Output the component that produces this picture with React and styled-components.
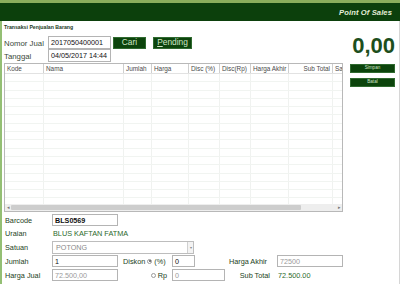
import React from "react";
import styled, { createGlobalStyle } from "styled-components";

const Global = createGlobalStyle`
  html, body { margin: 0; padding: 0; background: #fff; }
  body { font-family: "Liberation Sans", Arial, sans-serif; }
  * { box-sizing: border-box; }
`;

const Window = styled.div`
  width: 400px;
  height: 284px;
  overflow: hidden;
  display: flex;
  flex-direction: column;
  background: #fff;
`;

const TopStrip = styled.div`
  height: 3px;
  background: #8aae5c;
`;

const Header = styled.div`
  height: 18px;
  background: #0c400c;
  display: flex;
  align-items: center;
  justify-content: flex-end;
  padding-right: 8px;
`;

const HeaderTitle = styled.span`
  color: #e4eed8;
  font-weight: bold;
  font-style: italic;
  font-size: 7.6px;
  letter-spacing: 0.1px;
`;

const Main = styled.div`
  flex: 1;
  display: flex;
  border-left: 2px solid #94bf74;
  border-right: 1px solid #d6d6d6;
`;

const LeftCol = styled.div`
  width: 341px;
  padding-left: 2px;
  display: flex;
  flex-direction: column;
`;

const Title = styled.div`
  height: 10px;
  line-height: 10px;
  margin-top: 1px;
  font-size: 5.2px;
  font-weight: bold;
  color: #1d3a1d;
`;

const TopForm = styled.div`
  margin-top: 4px;
  display: flex;
  flex-direction: column;
`;

const TopRow = styled.div`
  display: flex;
  align-items: center;
  height: 13px;
`;

const TopLabel = styled.span`
  width: 44px;
  font-size: 7.8px;
  color: #3a4a3a;
  padding-top: 1px;
`;

const Field = styled.div`
  width: ${(p) => p.$w}px;
  height: ${(p) => p.$h || 12}px;
  border: 1px solid #b4b4b4;
  background: #fff;
  display: flex;
  align-items: center;
  padding-left: 2px;
  font-size: ${(p) => p.$fs || 7.2}px;
  color: ${(p) => (p.$muted ? "#9a9a9a" : "#111")};
  font-weight: ${(p) => (p.$bold ? "bold" : "normal")};
  white-space: nowrap;
  overflow: hidden;
`;

const GreenButton = styled.div`
  width: ${(p) => p.$w}px;
  height: ${(p) => p.$h}px;
  margin-left: ${(p) => p.$ml || 0}px;
  background: #0c440c;
  border: 1px solid #2f6a2f;
  color: #cfe6c6;
  font-size: ${(p) => p.$fs}px;
  display: flex;
  align-items: center;
  justify-content: center;
  line-height: 1;
`;

const Underlined = styled.span`
  text-decoration: underline;
`;

const Table = styled.div`
  margin-top: 1px;
  width: 339px;
  height: 149px;
  border: 1px solid #b8b8b8;
  display: flex;
  flex-direction: column;
  overflow: hidden;
`;

const HeadRow = styled.div`
  display: flex;
  height: 10px;
  border-bottom: 1px solid #e2e2e2;
  flex-shrink: 0;
`;

const HeadCell = styled.div`
  width: ${(p) => p.$w}px;
  flex-shrink: 0;
  border-right: 1px solid #cfcfcf;
  font-size: 6.4px;
  color: #4a4a4a;
  line-height: 9px;
  padding: 0 2px;
  text-align: ${(p) => (p.$right ? "right" : "left")};
  white-space: nowrap;
  overflow: hidden;
  &:last-child { border-right: none; }
`;

const Body = styled.div`
  flex: 1;
  overflow: hidden;
`;

const BodyRow = styled.div`
  display: flex;
  height: 8.3px;
  border-bottom: 1px solid #f1f4f1;
`;

const BodyCell = styled.div`
  width: ${(p) => p.$w}px;
  flex-shrink: 0;
  border-right: 1px solid #f0f2f0;
  &:last-child { border-right: none; }
`;

const ScrollBar = styled.div`
  height: 7px;
  flex-shrink: 0;
  background: #eeeeee;
  display: flex;
  align-items: center;
  font-size: 5px;
  color: #777;
`;

const Arrow = styled.span`
  width: 6px;
  text-align: center;
  line-height: 7px;
`;

const Thumb = styled.div`
  width: 290px;
  height: 5px;
  background: #cdcdcd;
  border-radius: 1px;
`;

const Spacer = styled.div`
  flex: 1;
`;

const BottomForm = styled.div`
  margin-top: 2px;
  padding-left: 1px;
  display: grid;
  grid-template-columns: 47px 66px 54px 58px 47px 66px;
  grid-template-rows: 12px 14px 14px 14px 14px;
  align-items: center;
`;

const Label = styled.span`
  font-size: 7.3px;
  color: #234323;
  white-space: nowrap;
  justify-self: ${(p) => (p.$right ? "end" : "start")};
  padding-right: ${(p) => (p.$right ? p.$pr || 3 : 0)}px;
`;

const Value = styled.span`
  font-size: 7.3px;
  color: ${(p) => p.$color || "#2c6a2c"};
  grid-column: ${(p) => p.$col || "auto"};
  white-space: nowrap;
  padding-left: 1px;
`;

const Select = styled.div`
  grid-column: 2 / 5;
  width: 142px;
  height: 13px;
  border: 1px solid #bdbdbd;
  display: flex;
  align-items: center;
  font-size: 7.2px;
  color: #8a8a8a;
  padding-left: 3px;
`;

const SelectBtn = styled.div`
  margin-left: auto;
  width: 6px;
  height: 11px;
  border-left: 1px solid #d0d0d0;
  background: #f3f3f3;
  font-size: 4px;
  color: #888;
  display: flex;
  align-items: center;
  justify-content: center;
`;

const RadioGroup = styled.div`
  display: flex;
  align-items: center;
  justify-content: ${(p) => (p.$end ? "flex-end" : "flex-start")};
  padding-left: ${(p) => (p.$end ? 0 : 5)}px;
  padding-right: ${(p) => (p.$end ? 5 : 0)}px;
  gap: 2px;
  font-size: 7.3px;
  color: #234323;
`;

const Radio = styled.span`
  width: 5px;
  height: 5px;
  border-radius: 50%;
  border: 1px solid #9a9a9a;
  background: #fff;
  display: inline-flex;
  align-items: center;
  justify-content: center;
  &::after {
    content: "";
    width: 2px;
    height: 2px;
    border-radius: 50%;
    background: ${(p) => (p.$on ? "#555" : "transparent")};
  }
`;

const RightCol = styled.div`
  flex: 1;
  display: flex;
  flex-direction: column;
  align-items: flex-end;
  padding-right: 4px;
`;

const Total = styled.div`
  margin-top: 14px;
  font-size: 22px;
  line-height: 22px;
  font-weight: bold;
  color: #1d4f1d;
`;

const SideButtons = styled.div`
  margin-top: 7px;
  display: flex;
  flex-direction: column;
  gap: 5px;
`;

const columns = [
  { name: "Kode", w: 39 },
  { name: "Nama", w: 80 },
  { name: "Jumlah", w: 28 },
  { name: "Harga", w: 37 },
  { name: "Disc (%)", w: 31 },
  { name: "Disc(Rp)", w: 31 },
  { name: "Harga Akhir", w: 38 },
  { name: "Sub Total", w: 44, right: true },
  { name: "Sa", w: 11 },
];

const rows = Array.from({ length: 16 }, (_, i) => i);

export default function App() {
  return (
    <>
      <Global />
      <Window>
        <TopStrip />
        <Header>
          <HeaderTitle>Point Of Sales</HeaderTitle>
        </Header>
        <Main>
          <LeftCol>
            <Title>Transaksi Penjualan Barang</Title>
            <TopForm>
              <TopRow>
                <TopLabel>Nomor Jual</TopLabel>
                <Field $w={63} $h={13}>2017050400001</Field>
                <GreenButton $w={33} $h={12} $ml={2} $fs={8.4}>Cari</GreenButton>
                <GreenButton $w={39} $h={12} $ml={7} $fs={8.4}>
                  <Underlined>P</Underlined>ending
                </GreenButton>
              </TopRow>
              <TopRow>
                <TopLabel>Tanggal</TopLabel>
                <Field $w={63} $h={13}>04/05/2017 14:44</Field>
              </TopRow>
            </TopForm>
            <Table>
              <HeadRow>
                {columns.map((c) => (
                  <HeadCell key={c.name} $w={c.w} $right={c.right}>
                    {c.name}
                  </HeadCell>
                ))}
              </HeadRow>
              <Body>
                {rows.map((r) => (
                  <BodyRow key={r}>
                    {columns.map((c) => (
                      <BodyCell key={c.name} $w={c.w} />
                    ))}
                  </BodyRow>
                ))}
              </Body>
              <ScrollBar>
                <Arrow>◂</Arrow>
                <Thumb />
                <Spacer />
                <Arrow>▸</Arrow>
              </ScrollBar>
            </Table>
            <BottomForm>
              <Label>Barcode</Label>
              <Field $w={66} $h={12} $bold>BLS0569</Field>
              <span />
              <span />
              <span />
              <span />

              <Label>Uraian</Label>
              <Value $col="2 / 7">BLUS KAFTAN FATMA</Value>

              <Label>Satuan</Label>
              <Select>
                POTONG
                <SelectBtn>▾</SelectBtn>
              </Select>
              <span />
              <span />

              <Label>Jumlah</Label>
              <Field $w={66} $h={12}>1</Field>
              <RadioGroup>
                Diskon
                <Radio $on />
                (%)
              </RadioGroup>
              <Field $w={23} $h={12}>0</Field>
              <Label $right $pr={10}>Harga Akhir</Label>
              <Field $w={66} $h={12} $muted>72500</Field>

              <Label>Harga Jual</Label>
              <Field $w={66} $h={12} $muted>72.500,00</Field>
              <RadioGroup $end>
                <Radio />
                Rp
              </RadioGroup>
              <Field $w={53} $h={12} $muted>0</Field>
              <Label $right $pr={7}>Sub Total</Label>
              <Value>72.500.00</Value>
            </BottomForm>
          </LeftCol>
          <RightCol>
            <Total>0,00</Total>
            <SideButtons>
              <GreenButton $w={45} $h={9} $fs={4.6}>Simpan</GreenButton>
              <GreenButton $w={45} $h={9} $fs={4.6}>Batal</GreenButton>
            </SideButtons>
          </RightCol>
        </Main>
      </Window>
    </>
  );
}
